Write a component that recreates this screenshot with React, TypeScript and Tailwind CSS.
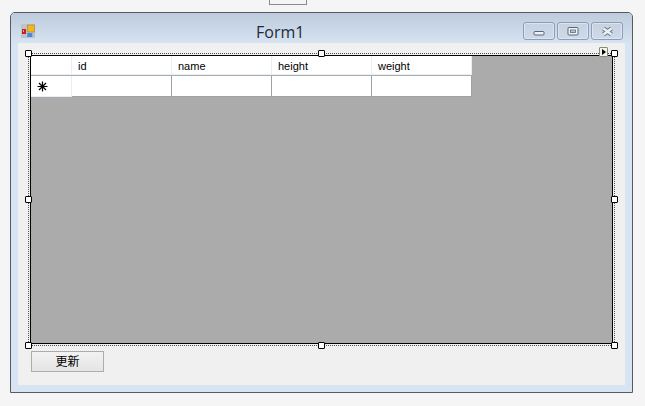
const columns = ["id", "name", "height", "weight"];

const handles = [
  "left-[-6px] top-[-6px]",
  "left-[287px] top-[-6px]",
  "left-[580px] top-[-6px]",
  "left-[-6px] top-[140px]",
  "left-[580px] top-[140px]",
  "left-[-6px] top-[286px]",
  "left-[287px] top-[286px]",
  "left-[580px] top-[286px]",
];

function FormIcon() {
  return (
    <svg width="14" height="14" viewBox="0 0 14 14">
      <rect width="14" height="14" fill="#bcc3ce" />
      <rect x="1" y="5" width="4" height="5" fill="#c8201c" />
      <rect x="2" y="6" width="1" height="2" fill="#f4a0a0" />
      <rect x="6.3" y="1" width="7" height="7" fill="#f0b820" stroke="#b08018" strokeWidth="0.6" />
      <rect x="6.3" y="9" width="5" height="4" fill="#4a88e0" />
    </svg>
  );
}

function CaptionButton({ children }: { children: React.ReactNode }) {
  return (
    <div className="flex h-[18px] w-[32px] items-center justify-center rounded-[3px] border border-[#8d9db6] bg-gradient-to-b from-[#c6d2e0] to-[#cddaea] shadow-[inset_0_0_0_1px_#dde6f0]">
      {children}
    </div>
  );
}

export default function App() {
  return (
    <div className="relative h-[406px] w-[645px] overflow-hidden bg-[#f5f5f5] font-['Liberation_Sans','Noto_Sans_CJK_JP',sans-serif] text-[11px] text-black">
      <div className="ml-[269px] h-[5px] w-[38px] border border-t-0 border-[#8a8a8a] bg-[#f5f5f5]" />

      <div className="ml-[10px] mt-[7px] h-[381px] w-[623px] rounded-t-[5px] border border-[#555b60] bg-[#d8e4f2]">
        {/* title bar */}
        <div className="flex h-[30px] items-center rounded-t-[4px] bg-gradient-to-b from-[#bdcbdc] to-[#d6e3f1] pl-[10px] pr-[9px] pt-[6px]">
          <FormIcon />
          <div className="ml-[221px] mt-[2px] flex-1 font-['Open_Sans',sans-serif] text-[16px] leading-none text-[#1c2a3a]">
            Form1
          </div>
          <div className="flex gap-[2px]">
            <CaptionButton>
              <svg width="12" height="18" viewBox="0 0 12 18" className="text-[#5a6678]">
                <rect x="1" y="9.5" width="10" height="3.5" rx="1" fill="#eef2f6" stroke="currentColor" />
              </svg>
            </CaptionButton>
            <CaptionButton>
              <svg width="12" height="18" viewBox="0 0 12 18" className="text-[#5a6678]">
                <rect x="1" y="5.5" width="10" height="7.5" rx="1" fill="#eef2f6" stroke="currentColor" />
                <rect x="3.5" y="8" width="5" height="2.5" fill="#b9c6d6" stroke="currentColor" strokeWidth="0.8" />
              </svg>
            </CaptionButton>
            <CaptionButton>
              <svg width="13" height="18" viewBox="0 0 13 18">
                <path d="M2.5 6.5l8 6M10.5 6.5l-8 6" stroke="#6a7688" strokeWidth="4.4" />
                <path d="M2.5 6.5l8 6M10.5 6.5l-8 6" stroke="#eef2f6" strokeWidth="2.4" />
              </svg>
            </CaptionButton>
          </div>
        </div>

        {/* client area */}
        <div className="ml-[7px] h-[342px] w-[607px] bg-[#f0f0f0] pl-[12px] pt-[12px]">
          <div className="relative h-[289px] w-[583px] border border-black bg-[#ababab] outline-1 outline-offset-[1px] outline-dotted outline-[#555]">
            <div className="flex h-[20px]">
              <div className="h-[19px] w-[41px] border-r border-b border-[#e6eef7] bg-white" />
              {columns.map((col) => (
                <div
                  key={col}
                  className="flex h-[19px] w-[100px] items-center border-r border-b border-[#e6eef7] bg-white pl-[6px] pt-[2px] leading-none"
                >
                  {col}
                </div>
              ))}
            </div>
            <div className="flex h-[21px]">
              <div className="flex h-[21px] w-[41px] items-center border-r border-b border-[#e6eef7] bg-white pl-[6px]">
                <svg width="11" height="11" viewBox="0 0 11 11" stroke="black" strokeWidth="1.2">
                  <path d="M5.5 0.5v10M0.5 5.5h10M2 2l7 7M9 2l-7 7" />
                </svg>
              </div>
              {columns.map((col) => (
                <div key={col} className="h-[21px] w-[100px] border-r border-b border-[#a0a0a0] bg-white" />
              ))}
            </div>

            {handles.map((pos) => (
              <div
                key={pos}
                className={`absolute ${pos} h-[7px] w-[7px] rounded-[1px] border border-black bg-white`}
              />
            ))}
            <div className="absolute left-[568px] top-[-9px] flex h-[10px] w-[9px] items-center justify-center rounded-[1px] border border-[#8a8a70] bg-[#f4f4ea]">
              <div className="h-0 w-0 border-y-[3px] border-l-[4px] border-y-transparent border-l-black" />
            </div>
          </div>

          <div className="ml-[1px] mt-[7px] flex h-[21px] w-[73px] items-center justify-center border border-[#adadad] bg-gradient-to-b from-[#f2f2f2] to-[#e4e4e4] text-[12px]">
            更新
          </div>
        </div>
      </div>
    </div>
  );
}
